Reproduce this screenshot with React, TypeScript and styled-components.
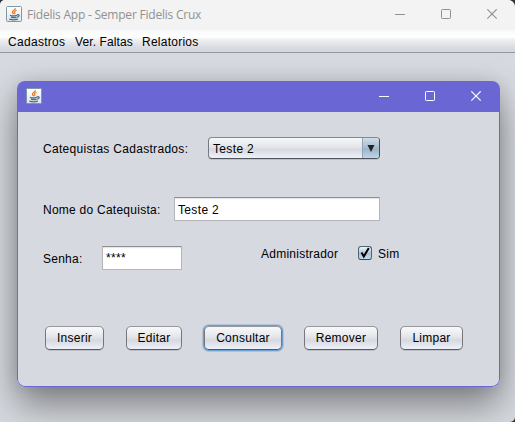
import React from "react";
import styled, { createGlobalStyle, css } from "styled-components";

const GlobalStyle = createGlobalStyle`
  * { box-sizing: border-box; }
  html, body, #root { margin: 0; width: 100%; height: 100%; overflow: hidden; }
  body { background: #303030; }
`;

const AppWindow = styled.div`
  width: 515px;
  height: 422px;
  overflow: hidden;
  display: flex;
  flex-direction: column;
  border-radius: 5px 7px 5px 0;
  background: #d6d9df;
  font: 12px/15px "Liberation Sans", Arial, sans-serif;
  color: #000;
`;

const TitleBar = styled.header<{ $active?: boolean }>`
  flex: none;
  display: flex;
  align-items: center;
  height: ${(p) => (p.$active ? 31 : 30)}px;
  padding: ${(p) => (p.$active ? "0 18px 1px 9px" : "0 17px 2px 6px")};
  background: ${(p) => (p.$active ? "#6a67d5" : "#f3f3f3")};
  color: ${(p) => (p.$active ? "#fff" : "#919191")};
`;

const Title = styled.h1`
  margin: 2px 0 0 5px;
  font: 400 12px/16px "Open Sans", "Noto Sans", sans-serif;
  letter-spacing: -0.22px;
  white-space: nowrap;
`;

const WindowControls = styled.div`
  margin-left: auto;
  display: flex;
  gap: 35px;
  svg { display: block; }
`;

const MenuBar = styled.nav`
  flex: none;
  display: flex;
  gap: 10px;
  height: 23px;
  padding: 5px 8px 0;
  background: linear-gradient(#f8f9fa 0, #ffffff 7px, #f1f2f4 9px, #d9dce2 17px, #d3d6dd 22px);
  border-bottom: 1px solid #9297a1;
`;

const MenuItem = styled.span<{ $width: number; $spacing: number }>`
  width: ${(p) => p.$width}px;
  letter-spacing: ${(p) => p.$spacing}px;
  white-space: nowrap;
`;

const Desktop = styled.main`
  flex: 1;
  padding: 28px 15px 35px 17px;
`;

const Dialog = styled.section`
  height: 306px;
  display: flex;
  flex-direction: column;
  overflow: hidden;
  border-radius: 8px;
  background: #d6d9df;
  box-shadow: 0 18px 36px rgba(0, 0, 0, 0.42), 0 0 16px rgba(0, 0, 0, 0.1);
`;

const DialogBody = styled.form`
  flex: 1;
  border: solid #6a67d5;
  border-width: 0 1px 1px;
  border-radius: 0 0 8px 8px;
  padding: 25px 0 0 25px;
`;

const Row = styled.div<{ $height: number; $gapBelow: number }>`
  display: flex;
  align-items: flex-start;
  height: ${(p) => p.$height}px;
  margin-bottom: ${(p) => p.$gapBelow}px;
`;

const Label = styled.label<{ $width: number; $spacing?: number; $top?: number }>`
  flex: none;
  width: ${(p) => p.$width}px;
  padding-top: ${(p) => p.$top ?? 5}px;
  letter-spacing: ${(p) => p.$spacing ?? 0.25}px;
  white-space: nowrap;
`;

const Combo = styled.div`
  display: flex;
  width: 172px;
  height: 22px;
  border: 1px solid;
  border-color: #85888e #354f64 #4f535b #767981;
  border-radius: 4px;
  overflow: hidden;
  background: linear-gradient(#f6f7f9, #e3e5e9 45%, #d6d9df 58%, #eff1f8);
  box-shadow: 0 1px 0 rgba(90, 95, 105, 0.2);
`;

const ComboValue = styled.span`
  flex: 1;
  padding: 4px 0 0 4px;
  letter-spacing: 0.35px;
`;

const ComboArrow = styled.span`
  display: grid;
  place-items: center;
  width: 17px;
  background: linear-gradient(#cfdde8, #a7bdcd 48%, #9eb6c8 56%, #bcd5e8);
  border-left: 1px solid #91a6b8;
`;

const Field = styled.div<{ $width: number; $masked?: boolean }>`
  width: ${(p) => p.$width}px;
  height: 24px;
  padding: ${(p) => (p.$masked ? 4 : 5)}px 0 0 3px;
  background: linear-gradient(#d5d7da 0, #f7f7f8 1px, #fff 2px);
  border: 1px solid #b5b6b9;
  border-top-color: #8d8e92;
  letter-spacing: 0.35px;
`;

const Option = styled.div`
  display: flex;
  height: 14px;
  margin-left: 79px;
`;

const CheckBox = styled.span`
  display: grid;
  place-items: center;
  width: 14px;
  height: 14px;
  margin-right: 6px;
  border: 1px solid #4d6475;
  border-bottom-color: #304656;
  border-radius: 3px;
  background: linear-gradient(#eef4f9, #abc0d1 55%, #c7ddec);
  svg { overflow: visible; }
`;

const Actions = styled.div`
  display: flex;
  gap: 22px;
  padding-left: 2px;
`;

const focusRing = css`
  box-shadow: 0 0 0 1px #6c9fce, 0 0 0 2px rgba(115, 164, 209, 0.4);
`;

const Button = styled.button<{ $width: number; $focused?: boolean; $spacing?: number }>`
  width: ${(p) => p.$width}px;
  height: 24px;
  padding: 1px 0 0;
  border: 1px solid;
  border-color: #96989c #75777c #55585f #75777c;
  border-radius: 5px;
  background: linear-gradient(#f8f9fa, #e4e6ea 45%, #d6d9df 60%, #eff1fa);
  box-shadow: 0 1px 0 rgba(90, 95, 105, 0.2);
  color: #000;
  font: inherit;
  letter-spacing: ${(p) => p.$spacing ?? 0.25}px;
  white-space: nowrap;
  ${(p) => p.$focused && focusRing}
`;

const JavaIcon = () => (
  <svg width="16" height="16" viewBox="0 0 16 16" fill="none">
    <defs>
      <linearGradient id="tile" x1="0" y1="0" x2="0" y2="1">
        <stop stopColor="#fff" />
        <stop offset="1" stopColor="#dfe5e9" />
      </linearGradient>
    </defs>
    <rect x=".5" y=".5" width="15" height="15" rx="1" fill="url(#tile)" stroke="#8197a5" />
    <path d="M9.2 2.2c.9 1.6-3.3 2.5-2.7 4.2.3.8 1.1 1 1.1 1.8" stroke="#eb7b22" strokeWidth="1.4" />
    <path d="M10.6 4.3C8.5 5.2 8.2 5.8 8.8 6.6c.4.5.2 1-.2 1.6" stroke="#eb7b22" strokeWidth="1.2" />
    <path d="M4 9.4c1.5.6 5 .6 7 0M5 11.3c1.5.4 4 .4 5.6 0M3.3 13.2c2 .6 6.6.6 8.6 0M11 8.9c2.9-.9 2.8 1.9 0 2.3" stroke="#456f8c" strokeWidth="1.3" />
  </svg>
);

const Controls = () => (
  <WindowControls>
    <svg width="11" height="11" stroke="currentColor"><path d="M0 5.5h10" /></svg>
    <svg width="11" height="11" fill="none" stroke="currentColor"><rect x=".5" y=".5" width="9" height="9" rx=".8" /></svg>
    <svg width="11" height="11" stroke="currentColor" strokeWidth="1.2"><path d="m.3.3 9.4 9.4m0-9.4L.3 9.7" /></svg>
  </WindowControls>
);

export default function App() {
  return (
    <>
      <GlobalStyle />
      <AppWindow>
        <TitleBar>
          <JavaIcon />
          <Title>Fidelis App - Semper Fidelis Crux</Title>
          <Controls />
        </TitleBar>
        <MenuBar>
          <MenuItem $width={57} $spacing={0.3}>Cadastros</MenuItem>
          <MenuItem $width={57} $spacing={0.1}>Ver. Faltas</MenuItem>
          <MenuItem $width={57} $spacing={0.25}>Relatorios</MenuItem>
        </MenuBar>
        <Desktop>
          <Dialog>
            <TitleBar $active>
              <JavaIcon />
              <Controls />
            </TitleBar>
            <DialogBody>
              <Row $height={22} $gapBelow={38}>
                <Label $width={165} $spacing={0.3}>Catequistas Cadastrados:</Label>
                <Combo>
                  <ComboValue>Teste 2</ComboValue>
                  <ComboArrow>
                    <svg width="8" height="7"><path d="M.5 0h7L4 7Z" fill="#202326" /></svg>
                  </ComboArrow>
                </Combo>
              </Row>
              <Row $height={24} $gapBelow={25}>
                <Label $width={131} $top={6}>Nome do Catequista:</Label>
                <Field $width={206}>Teste 2</Field>
              </Row>
              <Row $height={24} $gapBelow={56}>
                <Label $width={59} $top={6}>Senha:</Label>
                <Field $width={80} $masked>****</Field>
                <Option>
                  <Label $width={97} $top={1}>Administrador</Label>
                  <CheckBox>
                    <svg width="10" height="10" fill="none" stroke="#000" strokeWidth="2"><path d="m1.5 4.5 2.3 4L8.8 0" /></svg>
                  </CheckBox>
                  <Label $width={30} $top={1}>Sim</Label>
                </Option>
              </Row>
              <Actions>
                <Button type="button" $width={59}>Inserir</Button>
                <Button type="button" $width={56}>Editar</Button>
                <Button type="button" $width={78} $focused>Consultar</Button>
                <Button type="button" $width={74}>Remover</Button>
                <Button type="button" $width={63}>Limpar</Button>
              </Actions>
            </DialogBody>
          </Dialog>
        </Desktop>
      </AppWindow>
    </>
  );
}
